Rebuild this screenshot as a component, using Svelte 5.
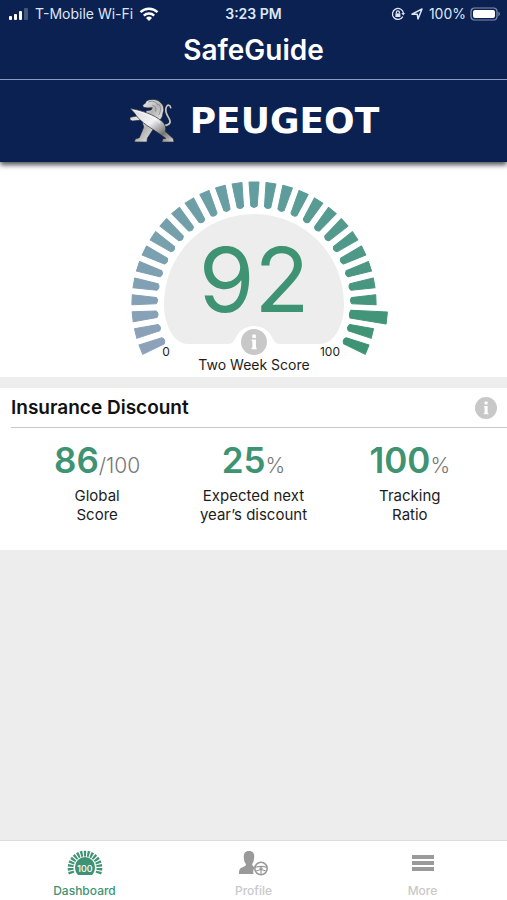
<script>
    const score = 92;
    const tickCount = 29;
    const step = 8;
    const stops = [[141, 161, 186], [98, 158, 160], [62, 147, 115]];

    let activeTab = $state('Dashboard');

    const metrics = [
        { value: '86', unit: '/100', lines: ['Global', 'Score'] },
        { value: '25', unit: '%', lines: ['Expected next', 'year’s discount'] },
        { value: '100', unit: '%', lines: ['Tracking', 'Ratio'] }
    ];

    // blue on the left, green on the right
    function tickColor(i) {
        const t = i / (tickCount - 1) * 2;
        const a = t < 1 ? stops[0] : stops[1];
        const b = t < 1 ? stops[1] : stops[2];
        const f = t < 1 ? t : t - 1;
        return 'rgb(' + a.map((c, n) => Math.round(c + (b[n] - c) * f)).join(',') + ')';
    }

    const current = Math.round(score / 100 * (tickCount - 1));
    const ticks = Array.from({ length: tickCount }, (_, i) => ({
        angle: (i - (tickCount - 1) / 2) * step,
        color: tickColor(i),
        active: i == current
    }));
    const smallTicks = Array.from({ length: 17 }, (_, i) => (i - 8) * 13.5);
</script>

{#snippet info()}
    <svg viewBox="0 0 24 24" aria-hidden="true">
        <circle cx="12" cy="12" r="12" fill="#c8c8c8" />
        <rect x="10.400" y="5" width="3.400" height="3.200" rx=".8" fill="#fff" />
        <path d="M9.800 9.800h4v7.400h.7v1.500H9.700v-1.500h.8v-6h-.7z" fill="#fff" />
    </svg>
{/snippet}

<div class="app">
    <header>
        <div class="status">
            <div class="status-left">
                <svg width="22" height="14" viewBox="0 0 22 14" fill="#fff">
                    <rect x="2" y="9" width="3" height="4" rx="1" />
                    <rect x="7" y="7" width="3" height="6" rx="1" />
                    <rect x="12" y="4" width="3" height="9" rx="1" />
                    <rect x="17" y="1" width="4" height="12" rx="1" opacity=".25" />
                </svg>
                <span>T-Mobile Wi-Fi</span>
                <svg width="20" height="14" viewBox="0 0 20 14" fill="none" stroke="#fff" stroke-width="2.4">
                    <path d="M1.5 5.2a12.2 12.2 0 0 1 17 0" />
                    <path d="M4.8 8.6a7.6 7.6 0 0 1 10.4 0" />
                    <path d="M7 11a4.4 4.4 0 0 1 6 0L10 14z" fill="#fff" stroke="none" />
                </svg>
            </div>
            <span class="time">3:23 PM</span>
            <div class="status-right">
                <svg width="14" height="14" viewBox="0 0 14 14" fill="none" stroke="#dfe6f5" stroke-width="1.3">
                    <path d="M11.8 9.6A5.5 5.5 0 1 1 12.4 6" />
                    <path d="M10.4 6h3.6l-1.8 2.6z" fill="#dfe6f5" stroke="none" />
                    <rect x="4.4" y="6.4" width="5" height="3.6" fill="#dfe6f5" stroke="none" />
                    <path d="M5.4 6.6V5.4a1.5 1.5 0 0 1 3 0v1.2" />
                </svg>
                <svg width="12" height="12" viewBox="0 0 12 12" fill="none" stroke="#dfe6f5" stroke-width="1.5" stroke-linejoin="round">
                    <path d="M1 6.2 11 1 7 11 6.2 6.2z" />
                </svg>
                <span class="charge">
                    100%
                    <svg width="30" height="14" viewBox="0 0 30 14">
                        <rect x="1" y="1" width="26" height="12" rx="3.5" fill="none" stroke="#8390ac" stroke-width="1.2" />
                        <rect x="3" y="3" width="22" height="8" rx="2" fill="#fff" />
                        <path d="M28.4 4.8c1.8.6 1.8 3.8 0 4.4z" fill="#8390ac" />
                    </svg>
                </span>
            </div>
        </div>
        <h1>SafeGuide</h1>
        <div class="brand">
            <svg width="48" height="46" viewBox="6 18 144 138" aria-hidden="true">
                <defs>
                    <linearGradient id="steel" x1="0" y1="0" x2="1" y2="1">
                        <stop offset="0" stop-color="#f4f4f4" />
                        <stop offset=".5" stop-color="#b4b4b4" />
                        <stop offset="1" stop-color="#eee" />
                    </linearGradient>
                    <linearGradient id="blade" x1="0" y1="0" x2="1" y2="1">
                        <stop offset="0" stop-color="#d8d8d8" />
                        <stop offset=".45" stop-color="#f2f2f2" />
                        <stop offset=".75" stop-color="#747474" />
                        <stop offset="1" stop-color="#d9d9d9" />
                    </linearGradient>
                </defs>
                <path d="M114 101c18-2 22-10 15-22-9-14-13-24-8-34 4-8 12-7 13 2" fill="none" stroke="#1b2233" stroke-width="8" />
                <path d="M114 101c18-2 22-10 15-22-9-14-13-24-8-34 4-8 12-7 13 2" fill="none" stroke="#c6c6c6" stroke-width="5" stroke-linecap="round" />
                <path d="M50 39 59 33c-1-6 7-10 16-10 14-2 25 2 31 11 8 7 9 21 5 29-1 14-8 23-19 26L57 65l4-9 14-2 4-7-14 1-13-2z" fill="url(#steel)" stroke="#202434" stroke-width="2" />
                <path d="M67 30c12-5 25 0 28 9M79 40c9 1 12 8 10 19M97 36c9 7 8 22 1 33" fill="none" stroke="#8b8e94" stroke-width="3" />
                <path d="M12 76l20-4 17 7-8 6-21 2-8-3z" fill="#dedede" stroke="#202434" stroke-width="2" />
                <path d="M46 78l38 30-20 31-1 11H25l3-9 12-4 13-31z" fill="url(#steel)" stroke="#202434" stroke-width="2" />
                <path d="M12 49c37 7 72 19 95 38 12 10 14 24 11 31l24 22 2 10h-36l2-9 9-2-31-22C65 102 38 85 26 64z" fill="url(#blade)" stroke="#202434" stroke-width="2" />
                <path d="M24 55c33 8 58 20 78 38" fill="none" stroke="#fff" stroke-width="3" opacity=".7" />
            </svg>
            <span>PEUGEOT</span>
        </div>
    </header>

    <main>
        <section class="gauge">
            <svg class="dial" viewBox="-136 -128 272 200">
                <path d="M-66 40C-82 40-90 18-90 0A90 90 0 0 1 90 0C90 18 82 40 66 40H26C20 40 19 34 16 30A20 20 0 0 0-16 30C-19 34-20 40-26 40z" fill="#ededed" />
                {#each ticks as tick}
                    <path
                        transform="rotate({tick.angle})"
                        d={tick.active ? 'M-6-133.500H6L4-97Q0-95-4-97z' : 'M-5-122 5-122 3.200-98Q0-95-3.200-98z'}
                        fill={tick.color}
                        stroke={tick.color}
                        stroke-width="1"
                        stroke-linejoin="round"
                    />
                {/each}
                <text class="score" x="0" y="8">{score}</text>
                <text class="limit" x="-88" y="52">0</text>
                <text class="limit" x="76" y="52">100</text>
                <text class="caption" x="0" y="66">Two Week Score</text>
            </svg>
            <button class="info dial-info" aria-label="About the score">{@render info()}</button>
        </section>

        <section class="discount">
            <div class="discount-head">
                <h2>Insurance Discount</h2>
                <button class="info" aria-label="About the discount">{@render info()}</button>
            </div>
            <div class="metrics">
                {#each metrics as metric}
                    <div class="metric">
                        <div><strong>{metric.value}</strong><span class="unit">{metric.unit}</span></div>
                        <p>{metric.lines[0]}<br />{metric.lines[1]}</p>
                    </div>
                {/each}
            </div>
        </section>
    </main>

    <nav>
        <button class:active={activeTab == 'Dashboard'} onclick={() => activeTab = 'Dashboard'}>
            <svg width="36" height="28" viewBox="-18 -18 36 28">
                {#each smallTicks as angle}
                    <path transform="rotate({angle})" d="M-1.300-17.300H1.300L.9-11.500H-.9z" fill="currentColor" />
                {/each}
                <path d="M-7 7C-9 5-10 2-10-1a10 10 0 0 1 20 0C10 2 9 5 7 7z" fill="currentColor" />
                <text class="mini" x="0" y="4">100</text>
            </svg>
            Dashboard
        </button>
        <button class:active={activeTab == 'Profile'} onclick={() => activeTab = 'Profile'}>
            <svg width="36" height="28" viewBox="0 0 36 28">
                <path d="M13 1c4 0 5.600 2.500 5.200 6.500C18 11 17 13 16.200 14c0 2 1 2.500 3 3.200-2 2-2.400 4.600-1.600 6.800H3c0-4 .6-5.800 3-6.600 2.600-.8 4-1.600 4-3.400-1.200-1-2-3-2.200-6.500C7.600 3.500 9 1 13 1z" fill="#9a9a9a" />
                <circle cx="25" cy="18.500" r="6.200" fill="#fff" stroke="#9a9a9a" stroke-width="1.600" />
                <path d="M19 17.500c4-1.600 8-1.600 12 0M25 18.500v6M25 19.500l-5 1.500M25 19.500l5 1.500" fill="none" stroke="#9a9a9a" stroke-width="1.200" />
                <circle cx="25" cy="18.500" r="1.500" fill="#9a9a9a" />
            </svg>
            Profile
        </button>
        <button class:active={activeTab == 'More'} onclick={() => activeTab = 'More'}>
            <svg width="36" height="28" viewBox="0 0 36 28" fill="#9a9a9a">
                <rect x="7" y="5" width="22" height="4" />
                <rect x="7" y="11" width="22" height="4" />
                <rect x="7" y="17" width="22" height="4" />
            </svg>
            More
        </button>
    </nav>
</div>

<style>
:global(body) {
    margin: 0;
    background: #ededed;
}

.app {
    display: flex;
    flex-direction: column;
    min-height: 100vh;
    font-family: Inter, "Liberation Sans", sans-serif;
    color: #1c1c1c;
}

button {
    border: 0;
    padding: 0;
    background: none;
    font-family: inherit;
    cursor: pointer;
}

header {
    position: relative;
    z-index: 1;
    background: #0a2152;
    color: #fff;
    box-shadow: 0 3px 5px #555;
}

.status {
    display: grid;
    grid-template-columns: 1fr auto 1fr;
    align-items: center;
    height: 27px;
    padding: 0 7px;
    font-size: 14px;
    color: #dfe6f5;
}

.status-left,
.status-right {
    display: flex;
    align-items: center;
    gap: 6px;
}

.status-right {
    justify-content: flex-end;
}

.charge {
    display: flex;
    align-items: center;
    gap: 4px;
}

.time {
    font-weight: 600;
}

h1 {
    margin: 0;
    height: 53px;
    line-height: 46px;
    box-sizing: border-box;
    border-bottom: 1px solid #8e9cc0;
    text-align: center;
    font-size: 28px;
    font-weight: 600;
}

.brand {
    display: flex;
    align-items: center;
    justify-content: center;
    gap: 14px;
    height: 82px;
}

.brand svg {
    flex: none;
}

.brand span {
    font-family: "DejaVu Sans", sans-serif;
    font-weight: bold;
    font-size: 36px;
    line-height: 40px;
}

main {
    flex: 1;
}

.gauge {
    position: relative;
    display: flex;
    justify-content: center;
    padding: 14px 0 1px;
    margin-bottom: 11px;
    background: #fff;
}

.dial {
    width: 272px;
    height: 200px;
    overflow: visible;
}

.dial text {
    text-anchor: middle;
    fill: #1c1c1c;
}

.dial .score {
    font-size: 90px;
    fill: #3e9373;
}

.dial .limit {
    font-size: 12px;
}

.dial .caption {
    font-size: 14px;
}

.info {
    display: block;
    width: 22px;
    height: 22px;
}

.info svg {
    display: block;
    width: 100%;
}

.dial-info {
    position: absolute;
    left: 50%;
    bottom: 22px;
    width: 26px;
    height: 26px;
    transform: translateX(-50%);
}

.discount {
    background: #fff;
    padding-bottom: 26px;
}

.discount-head {
    display: flex;
    align-items: center;
    justify-content: space-between;
    height: 39px;
    margin-left: 11px;
    padding-right: 10px;
    border-bottom: 1px solid #c8c8c8;
}

h2 {
    margin: 0;
    font-size: 19px;
    font-weight: 600;
    color: #111;
}

.metrics {
    display: grid;
    grid-template-columns: repeat(3, 1fr);
    padding: 12px 19px 0;
    text-align: center;
}

.metric div {
    height: 40px;
    line-height: 40px;
}

strong {
    font-size: 35px;
    font-weight: 600;
    color: #3e9373;
}

.unit {
    font-size: 21px;
    font-weight: 300;
    color: #777;
}

.metric p {
    margin: 6px 0 0;
    font-size: 15px;
    line-height: 19px;
    white-space: nowrap;
}

nav {
    display: grid;
    grid-template-columns: repeat(3, 1fr);
    height: 60px;
    box-sizing: border-box;
    border-top: 1px solid #dcdcdc;
    background: #fff;
}

nav button {
    display: flex;
    flex-direction: column;
    align-items: center;
    gap: 5px;
    padding-top: 9px;
    font-size: 12px;
    line-height: 16px;
    font-weight: 500;
    color: #c9c9c9;
}

nav button.active {
    color: #3e9373;
}

.mini {
    font-size: 9px;
    font-weight: 500;
    text-anchor: middle;
    fill: #fff;
}
</style>
